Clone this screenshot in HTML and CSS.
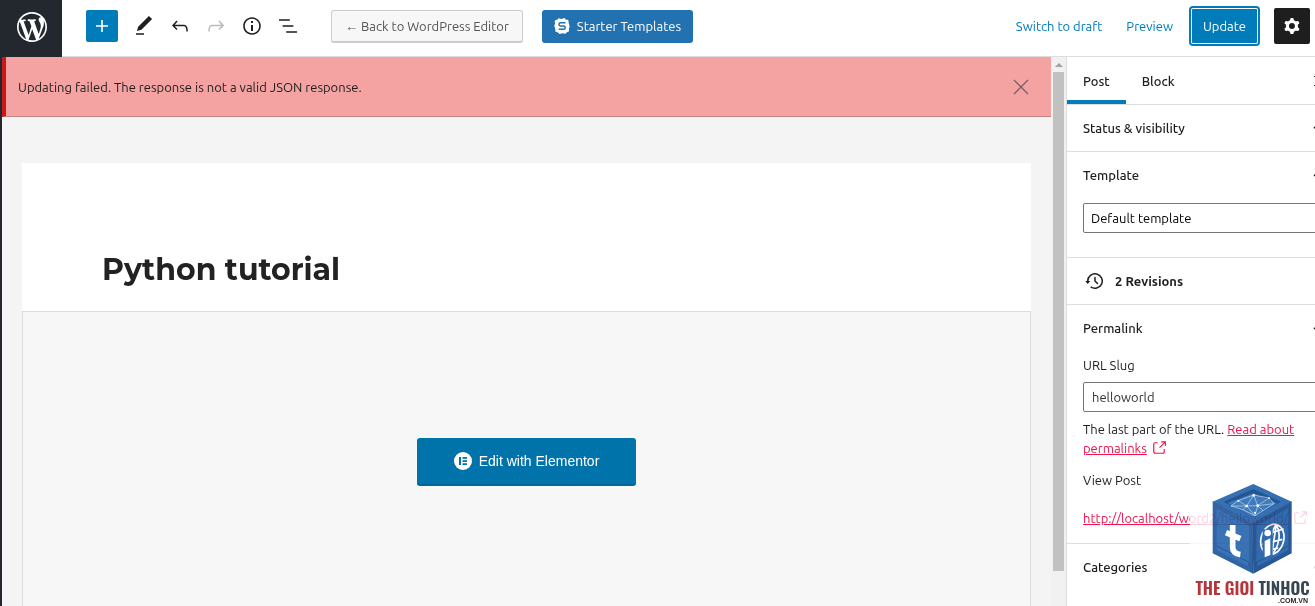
FILE: index.html
```html
<!DOCTYPE html>
<html lang="en">
<head>
<meta charset="utf-8">
<meta name="viewport" content="width=device-width, initial-scale=1">
<title>Edit Post</title>
<link rel="stylesheet" href="styles.css">
</head>
<body>
<div class="editor">
  <header class="topbar">
    <a class="site-logo" href="#" aria-label="View posts">
      <svg width="36" height="36" viewBox="-2 -2 24 24"><path d="M20 10c0-5.51-4.49-10-10-10C4.48 0 0 4.49 0 10c0 5.52 4.48 10 10 10 5.51 0 10-4.48 10-10zM7.78 15.37L4.37 6.22c.55-.02 1.17-.08 1.17-.08.5-.06.44-1.13-.06-1.11 0 0-1.45.11-2.37.11-.18 0-.37 0-.58-.01C4.12 2.69 6.87 1.11 10 1.11c2.33 0 4.45.87 6.05 2.34-.68-.11-1.65.39-1.65 1.58 0 .74.45 1.36.9 2.1.35.61.55 1.36.55 2.46 0 1.49-1.4 5-1.4 5l-3.03-8.37c.54-.02.82-.17.82-.17.5-.05.44-1.25-.06-1.22 0 0-1.44.12-2.38.12-.87 0-2.33-.12-2.33-.12-.5-.03-.56 1.2-.06 1.22l.92.08 1.26 3.41zM17.41 10c.24-.64.74-1.87.43-4.25.7 1.29 1.05 2.71 1.05 4.25 0 3.29-1.73 6.24-4.4 7.78.97-2.59 1.94-5.2 2.92-7.78zM6.1 18.09C3.12 16.65 1.11 13.53 1.11 10c0-1.3.23-2.48.72-3.59C3.25 10.3 4.67 14.2 6.1 18.09zm4.03-6.63l2.58 6.98c-.86.29-1.76.45-2.71.45-.79 0-1.57-.11-2.29-.33.81-2.38 1.62-4.74 2.42-7.1z"/></svg>
    </a>
    <div class="tools">
      <button class="tool-add" type="button" aria-label="Add block"><svg width="24" height="24" viewBox="0 0 24 24"><path d="M18 11.2h-5.2V6h-1.6v5.2H6v1.6h5.2V18h1.6v-5.2H18z"/></svg></button>
      <button class="tool" type="button" aria-label="Modes"><svg width="24" height="24" viewBox="0 0 24 24"><path d="M20.1 5.1L16.9 2 6.2 12.7l-1.3 4.4 4.5-1.3L20.1 5.1zM4 20.8h8v-1.5H4v1.5z"/></svg></button>
      <button class="tool" type="button" aria-label="Undo"><svg width="24" height="24" viewBox="0 0 24 24"><path d="M18.3 11.7c-.6-.6-1.4-.9-2.3-.9H6.7l2.9-3.3-1.1-1-4.5 5L8.5 16l1-1-2.7-2.7H16c.5 0 .9.2 1.3.5 1 1 1 3.4 1 4.5v.3h1.5v-.2c0-1.5 0-4.3-1.5-5.7z"/></svg></button>
      <button class="tool tool-off" type="button" aria-label="Redo"><svg width="24" height="24" viewBox="0 0 24 24"><path d="M15.6 6.5l-1.1 1 2.9 3.3H8c-.9 0-1.7.3-2.3.9-1.4 1.5-1.4 4.2-1.4 5.6v.2h1.5v-.3c0-1.1 0-3.5 1-4.5.3-.3.7-.5 1.3-.5h9.2L14.5 15l1.1 1.1 4.6-4.6-4.6-5z"/></svg></button>
      <button class="tool" type="button" aria-label="Details"><svg width="24" height="24" viewBox="0 0 24 24"><path d="M12 3.2c-4.8 0-8.8 3.9-8.8 8.8 0 4.8 3.9 8.8 8.8 8.8 4.8 0 8.8-3.9 8.8-8.8 0-4.8-4-8.8-8.8-8.8zm0 16c-4 0-7.2-3.3-7.2-7.2C4.8 8 8 4.8 12 4.8s7.2 3.3 7.2 7.2c0 4-3.2 7.2-7.2 7.2zM11 17h2v-6h-2v6zm0-8h2V7h-2v2z"/></svg></button>
      <button class="tool" type="button" aria-label="List view"><svg width="24" height="24" viewBox="0 0 24 24"><path d="M13.8 5.2H3v1.5h10.8V5.2zm-3.6 12v1.5H21v-1.5H10.2zm7.2-6H6.6v1.5h10.8v-1.5z"/></svg></button>
    </div>
    <button class="btn-back" type="button">← Back to WordPress Editor</button>
    <button class="btn-starter" type="button">
      <svg width="16" height="16" viewBox="0 0 16 16"><path class="badge-shape" d="M4.500 .3l3 .7 3-.9 1.200 1.300 2.600.6.500 3.500.9 2.700-.8 2.800.2 2.300-2.200.9-1.300 1.600-3.100-.6-3 .7-1.500-1.500-2.500-.7-.3-3.200L.3 8l.7-2.800-.3-2.600 2.500-.8z"/><path class="badge-mark" d="M11.500 4.800H6.500Q5 4.800 5 6.300T6.500 8h3.200q1.500 0 1.500 1.600T9.700 11.200H4.700"/></svg>
      Starter Templates
    </button>
    <div class="actions">
      <button class="btn-link" type="button">Switch to draft</button>
      <button class="btn-link" type="button">Preview</button>
      <button class="btn-update" type="button">Update</button>
      <button class="btn-settings" type="button" aria-label="Settings"><svg width="24" height="24" viewBox="0 0 24 24"><path fill-rule="evenodd" d="M10.289 4.836A1 1 0 0111.275 4h1.306a1 1 0 01.987.836l.244 1.466c.787.26 1.503.679 2.108 1.218l1.393-.522a1 1 0 011.216.437l.653 1.13a1 1 0 01-.23 1.273l-1.148.944a6.025 6.025 0 010 2.435l1.149.946a1 1 0 01.23 1.272l-.653 1.13a1 1 0 01-1.216.437l-1.394-.522c-.605.54-1.32.958-2.108 1.218l-.244 1.466a1 1 0 01-.987.836h-1.306a1 1 0 01-.986-.836l-.244-1.466a5.995 5.995 0 01-2.108-1.218l-1.394.522a1 1 0 01-1.217-.436l-.653-1.131a1 1 0 01.23-1.272l1.149-.946a6.026 6.026 0 010-2.435l-1.148-.944a1 1 0 01-.23-1.272l.653-1.131a1 1 0 011.217-.437l1.393.522a5.994 5.994 0 012.108-1.218l.244-1.466zM14.929 12a3 3 0 11-6 0 3 3 0 016 0z"/></svg></button>
    </div>
  </header>

  <div class="workspace">
    <main class="content">
      <div class="notice" role="alert">
        <p class="notice-text">Updating failed. The response is not a valid JSON response.</p>
        <button class="notice-close" type="button" aria-label="Dismiss"><svg width="16" height="16" viewBox="0 0 16 16"><path d="M1 1l14 14M15 1L1 15"/></svg></button>
      </div>
      <article class="page">
        <h1 class="page-title">Python tutorial</h1>
        <div class="builder">
          <button class="btn-elementor" type="button">
            <svg width="18" height="18" viewBox="0 0 18 18"><circle cx="9" cy="9" r="9"/><path d="M5 5h2v8H5zM8.500 5H13v1.700H8.500zM8.500 8.200H13v1.700H8.500zM8.500 11.300H13V13H8.500z"/></svg>
            Edit with Elementor
          </button>
        </div>
      </article>
    </main>
    <div class="scrollbar" aria-hidden="true">
      <svg class="scroll-arrow" width="8" height="4" viewBox="0 0 8 4"><path d="M4 0l4 4H0z"/></svg>
      <div class="scroll-thumb"></div>
    </div>
    <aside class="sidebar">
      <div class="sidebar-inner">
        <div class="tabs">
          <button class="tab tab-active" type="button">Post</button>
          <button class="tab" type="button">Block</button>
          <button class="tabs-close" type="button" aria-label="Close settings"><svg width="24" height="24" viewBox="0 0 24 24"><path d="M7 7l10 10M17 7L7 17"/></svg></button>
        </div>
        <section class="panel">
          <button class="panel-head" type="button">Status &amp; visibility <svg class="chevron" width="24" height="24" viewBox="0 0 24 24"><path d="M7 11l5 5 5-5"/></svg></button>
        </section>
        <section class="panel">
          <button class="panel-head" type="button">Template <svg class="chevron" width="24" height="24" viewBox="0 0 24 24"><path d="M7 13l5-5 5 5"/></svg></button>
          <div class="panel-body template-body">
            <select class="select" aria-label="Template"><option>Default template</option></select>
          </div>
        </section>
        <section class="panel">
          <button class="panel-head revisions" type="button"><svg width="24" height="24" viewBox="0 0 24 24"><path d="M5.500 12h1.750l-2.500 3-2.500-3H4a8 8 0 113.134 6.350l.907-1.194A6.500 6.500 0 105.500 12zm9.530 1.970l-2.280-2.280V8.500a.75.75 0 00-1.500 0V12a.747.747 0 00.218.529l1.282-.84-1.280.842 2.500 2.500a.75.75 0 101.060-1.061z"/></svg>2 Revisions</button>
        </section>
        <section class="panel">
          <button class="panel-head" type="button">Permalink <svg class="chevron" width="24" height="24" viewBox="0 0 24 24"><path d="M7 13l5-5 5 5"/></svg></button>
          <div class="panel-body permalink-body">
            <label class="label" for="slug">URL Slug</label>
            <input class="input" id="slug" type="text" value="helloworld">
            <p class="help">The last part of the URL. <a class="link" href="#">Read about<br>permalinks</a> <svg class="ext" width="18" height="18" viewBox="0 0 24 24"><path d="M18.200 17c0 .7-.6 1.200-1.200 1.200H7c-.7 0-1.200-.6-1.200-1.200V7c0-.7.6-1.200 1.200-1.200h3.200V4.200H7C5.500 4.200 4.200 5.500 4.200 7v10c0 1.500 1.200 2.800 2.800 2.800h10c1.500 0 2.800-1.200 2.800-2.800v-3.600h-1.500V17zM14.900 3v1.500h3.700l-6.400 6.400 1.100 1.100 6.400-6.400v3.700h1.500V3h-6.300z"/></svg></p>
            <p class="view-label">View Post</p>
            <p class="view-url"><a class="link" href="#">http://localhost/word2/helloworld/</a> <svg class="ext" width="18" height="18" viewBox="0 0 24 24"><path d="M18.200 17c0 .7-.6 1.200-1.200 1.200H7c-.7 0-1.200-.6-1.200-1.200V7c0-.7.6-1.200 1.200-1.200h3.200V4.200H7C5.500 4.200 4.200 5.500 4.200 7v10c0 1.500 1.200 2.800 2.800 2.800h10c1.500 0 2.800-1.200 2.800-2.800v-3.600h-1.500V17zM14.900 3v1.500h3.700l-6.400 6.400 1.100 1.100 6.400-6.400v3.700h1.500V3h-6.300z"/></svg></p>
          </div>
        </section>
        <section class="panel panel-last">
          <button class="panel-head" type="button">Categories <svg class="chevron" width="24" height="24" viewBox="0 0 24 24"><path d="M7 13l5-5 5 5"/></svg></button>
        </section>
      </div>
    </aside>
  </div>
</div>

<div class="watermark">
  <svg class="cube" width="125" height="97" viewBox="45 30 375 291">
    <path fill="#3570b5" d="M235 42L350 95 232 160 113 95z"/>
    <path fill="#26568f" d="M235 57L318 95 232 140 146 95z"/>
    <path fill="#3f7abd" d="M235 70L306 99 232 140 158 99z"/>
    <path fill="#3265a6" d="M113 95L232 160 235 311 113 250z"/>
    <path fill="#3a72b6" d="M125 116L222 168V290L125 241z"/>
    <path fill="#295896" d="M350 95L232 160 235 311 350 250z"/>
    <path fill="#316aae" d="M340 115L244 167V291L340 241z"/>
    <path fill="none" stroke="#234c84" stroke-width="2" d="M113 95L232 160 350 95M233 160V310M125 228L222 277V290M340 228L244 277V290"/>
    <g fill="none" stroke="#c9dcf2" stroke-width="2"><path d="M168 108L190 92 236 75 282 84 297 101 264 122 240 137 204 119zM190 92L215 108 236 75 248 107 282 84M168 108L215 108 248 107 297 101M204 119L215 108 240 137 248 107 264 122"/></g>
    <g fill="#fff"><circle cx="236" cy="76" r="4"/><circle cx="215" cy="108" r="4"/><circle cx="248" cy="107" r="4"/><circle cx="190" cy="93" r="3"/><circle cx="282" cy="85" r="3"/><circle cx="240" cy="128" r="3"/></g>
    <path fill="none" stroke="#fff" stroke-width="17" d="M173 165V232Q173 251 196 254M153 188L196 206"/>
    <g fill="none" stroke="#fff" stroke-width="5"><ellipse cx="292" cy="208" rx="34" ry="46" transform="rotate(16 292 208)"/><path d="M304 163Q278 200 292 254M304 163Q326 206 292 254M266 195L326 177M262 223L322 208M270 243L310 234M304 163L290 254"/></g>
    <path fill="#316aae" d="M263 178H293V265H263z"/>
    <path fill="#fff" d="M269 213L286 205V255L269 262z"/><circle cx="278" cy="189" r="10" fill="#fff"/>
  </svg>
  <div class="brand"><span class="brand-red">THE GIOI</span> TINHOC</div>
  <div class="brand-domain">.COM.VN</div>
</div>
</body>
</html>
```

FILE: styles.css
```css
* { box-sizing: border-box; }

body {
  margin: 0;
  background: #fff;
  color: #1e1e1e;
  font: 13px/19px Ubuntu, "Noto Sans", "Open Sans", sans-serif;
}

button, input, select { font: inherit; color: inherit; }
button { margin: 0; padding: 0; border: 0; background: none; white-space: nowrap; cursor: pointer; }
p, h1 { margin: 0; }
svg { display: block; flex: none; fill: currentColor; }

.editor {
  display: flex;
  flex-direction: column;
  height: 100vh;
  overflow: hidden;
  border-left: 2px solid #23282e;
}

/* Top bar */
.topbar {
  display: flex;
  flex: none;
  align-items: center;
  height: 57px;
  padding-right: 5px;
  padding-bottom: 4px;
  border-bottom: 1px solid #ddd;
}
.site-logo {
  display: flex;
  align-self: flex-start;
  align-items: center;
  justify-content: center;
  width: 60px;
  height: 57px;
  padding-bottom: 4px;
  background: #23282e;
  color: #fff;
}
.tools { display: flex; align-items: center; margin-left: 24px; margin-right: 25px; }
.tool-add {
  display: flex;
  align-items: center;
  justify-content: center;
  width: 32px;
  height: 32px;
  margin-right: 8px;
  border-radius: 2px;
  background: #007cba;
  color: #fff;
}
.tool { display: flex; align-items: center; justify-content: center; width: 36px; height: 36px; }
.tool-off { color: #bbb; }
.btn-back {
  height: 33px;
  width: 192px;
  padding-top: 1px;
  border: 1px solid #ccc;
  border-bottom-width: 2px;
  border-radius: 3px;
  background: #f7f7f7;
  color: #555;
}
.btn-starter {
  display: flex;
  align-items: center;
  justify-content: center;
  gap: 7px;
  height: 33px;
  width: 151px;
  margin-left: 19px;
  border-radius: 3px;
  background: #2271b1;
  color: #fff;
}
.badge-mark { fill: none; stroke: #2271b1; stroke-width: 1.5; }
.actions { display: flex; align-items: center; margin-left: auto; }
.btn-link { margin-right: 24px; color: #007cba; }
.btn-update {
  width: 67px;
  height: 36px;
  margin-left: -6px;
  margin-right: 16px;
  border-radius: 2px;
  background: #007cba;
  color: #fff;
  box-shadow: inset 0 0 0 1px #fff, 0 0 0 2px #007cba;
}
.btn-settings {
  display: flex;
  align-items: center;
  justify-content: center;
  width: 36px;
  height: 36px;
  border-radius: 2px;
  background: #1e1e1e;
  color: #fff;
}

/* Workspace */
.workspace { display: flex; flex: 1; min-height: 0; }
.content { flex: 1; min-width: 0; overflow: hidden; background: #f4f4f4; }
.notice {
  display: flex;
  align-items: center;
  justify-content: space-between;
  height: 60px;
  padding: 1px 22px 0 12px;
  border-left: 4px solid #cc1818;
  border-bottom: 1px solid #c58383;
  background: #f4a2a2;
}
.notice-close svg { fill: none; stroke: #7c6262; stroke-width: 1.3; }
.page { margin: 46px 20px 0; background: #fff; }
.page-title {
  padding: 87px 80px 21px;
  font: 700 30px/40px Montserrat, Inter, sans-serif;
  color: #222;
}
.builder {
  display: flex;
  justify-content: center;
  padding: 126px 20px;
  border: 1px solid #ddd;
  background: #f7f7f7;
}
.btn-elementor {
  display: flex;
  align-items: center;
  justify-content: center;
  gap: 7px;
  width: 219px;
  height: 48px;
  border-bottom: 2px solid #006799;
  border-radius: 3px;
  background: #0073aa;
  color: #fff;
  font: 14px/20px "Liberation Sans", Arial, sans-serif;
}
.btn-elementor path { fill: #0073aa; }

.scrollbar {
  display: flex;
  flex: none;
  flex-direction: column;
  align-items: center;
  gap: 5px;
  width: 15px;
  padding: 6px 0 35px;
  background: #f1f1f1;
}
.scroll-arrow { color: #a3a3a3; }
.scroll-thumb { flex: 1; width: 11px; background: #c1c1c1; }

/* Sidebar: the panel column runs past the window's right edge */
.sidebar { flex: none; width: 249px; overflow: hidden; border-left: 1px solid #ddd; }
.sidebar-inner { width: 280px; }
.tabs { display: flex; height: 48px; border-bottom: 1px solid #ddd; }
.tab { padding: 1px 16px 0; border-bottom: 4px solid transparent; border-top: 4px solid transparent; font-weight: 500; }
.tab-active { border-bottom-color: #007cba; }
.tabs-close { margin-left: auto; margin-right: 16px; }
.tabs-close svg { fill: none; stroke: currentColor; }
.panel { border-bottom: 1px solid #ddd; }
.panel-last { border-bottom: 0; }
.panel-head {
  display: flex;
  align-items: center;
  justify-content: space-between;
  width: 100%;
  height: 46px;
  padding: 0 16px;
  font-weight: 500;
}
.chevron { fill: none; stroke: currentColor; stroke-width: 1.5; }
.revisions { justify-content: flex-start; gap: 8px; font-weight: 700; }
.panel-body { padding: 0 16px; }
.template-body { padding-top: 5px; padding-bottom: 24px; }
.select, .input {
  display: block;
  width: 100%;
  height: 30px;
  padding: 0 8px;
  border: 1px solid #757575;
  border-radius: 2px;
  background: #fff;
  appearance: none;
}
.select { padding: 0 7px; color: #000; }
.input { color: #2c3338; }
.permalink-body { padding-bottom: 15px; }
.label { display: block; padding: 5px 0 7px; }
.help { padding-top: 8px; }
.view-label { padding-top: 13px; }
.view-url { padding-top: 19px; white-space: nowrap; }
.link { color: #f0134d; }
.ext { display: inline-block; vertical-align: -4px; color: #f0134d; }

/* Site mark laid over the corner of the window */
.watermark {
  position: absolute;
  right: 0;
  bottom: 0;
  width: 125px;
  height: 126px;
  background: rgba(255, 255, 255, 0.8);
  text-align: center;
}
.cube { mix-blend-mode: multiply; }
.brand {
  padding-top: 2px;
  font: 600 17px/18px Oswald, "Bebas Neue", "Roboto Condensed", "Liberation Sans", sans-serif;
  color: #36454f;
  white-space: nowrap;
}
.brand-red { color: #b5353b; }
.brand-domain {
  padding-right: 7px;
  font: 700 7px/8px "Liberation Sans", Arial, sans-serif;
  text-align: right;
}
```
